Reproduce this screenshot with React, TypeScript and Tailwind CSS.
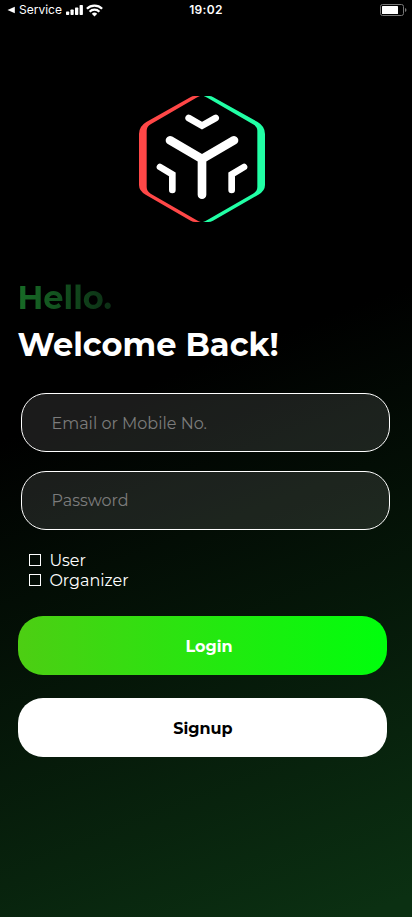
import type { ReactNode } from "react";

function StatusBar() {
  return (
    <header className="grid h-5 grid-cols-3 items-center pl-[7px] pr-[5px] font-['Inter',sans-serif] text-white">
      <div className="flex items-center">
        <svg width="8" height="8" viewBox="0 0 8 8" fill="currentColor"><path d="M.5 4 7.8.7v6.6z" /></svg>
        <span className="ml-1 w-[43px] whitespace-nowrap text-[12px] leading-5 tracking-[0px]">Service</span>
        <svg className="ml-1" width="17" height="10" viewBox="0 0 17 10" fill="currentColor">
          <rect x="0" y="6.5" width="3.2" height="3.5" rx=".7" />
          <rect x="4.5" y="4.6" width="3.2" height="5.4" rx=".7" />
          <rect x="9" y="2.5" width="3.3" height="7.5" rx=".7" />
          <rect x="13.6" y="0" width="3.3" height="10" rx=".7" />
        </svg>
        <svg className="ml-[3px]" width="17" height="13" viewBox="0 0 17 13" fill="none" stroke="currentColor" strokeWidth="2.3">
          <path d="M.9 4.7a10.8 10.8 0 0 1 15.2 0" />
          <path d="M3.6 7.7a7 7 0 0 1 9.8 0" />
          <path d="m8.5 12.4-2.7-2.7a3.9 3.9 0 0 1 5.4 0z" fill="currentColor" stroke="none" />
        </svg>
      </div>
      <div className="pr-[2px] text-center text-[12px] font-semibold leading-5 tracking-[0.3px]">19:02</div>
      <svg className="justify-self-end" width="27" height="12" viewBox="0 0 27 12">
        <rect x=".5" y=".5" width="23" height="11" rx="2" fill="none" stroke="#777" />
        <rect x="2" y="2" width="16" height="8" rx=".5" fill="white" />
        <path d="M25 4v4q1.5-.6 1.5-2T25 4" fill="#777" />
      </svg>
    </header>
  );
}

function Logo() {
  return (
    <svg className="ml-[130px] mt-[65px] block" width="145" height="145" viewBox="0 0 435 435" fill="none">
      <path fill="#ff4747" d="M210 33H193Q187 33 181 37L49 111Q27 124 27 147V300Q27 318 47 329L182 407Q189 411 196 411H212Q206 409 199 405L62 326Q50 319 50 306V137Q50 125 62 118L199 38Q205 35 210 33Z" />
      <path fill="#21ffa5" d="M221 33H238Q244 33 250 37L383 111Q405 124 405 147V300Q405 318 385 329L249 407Q242 411 235 411H219Q225 409 232 405L369 326Q382 319 382 306V137Q382 125 369 118L232 38Q226 35 221 33Z" />
      <g stroke="white" strokeLinecap="round">
        <path strokeWidth="26" d="M120 166 216 222 312 166M216 222V329" />
        <path strokeWidth="20" d="m176 99 40 23 41-23M90 246l37 22v47M342 246l-37 22v47" />
      </g>
    </svg>
  );
}

function Field({ label, type }: { label: string; type: string }) {
  return (
    <input
      type={type}
      placeholder={label}
      aria-label={label}
      className="block h-[59px] w-[369px] rounded-[25px] border border-white bg-[#7c7c7c]/22 px-[29.5px] pt-[2px] text-[16px] font-normal text-white outline-none placeholder:text-[#7c7c7c] placeholder:opacity-100 [&[type=password]]:pt-0"
    />
  );
}

function Choice({ children }: { children: ReactNode }) {
  return (
    <label className="flex h-5 items-center gap-[8.4px] text-[16px] font-normal leading-5 text-white">
      <input type="checkbox" className="size-3 appearance-none border border-white" />
      <span className="pt-[2px]">{children}</span>
    </label>
  );
}

export default function App() {
  return (
    <main className="h-[917px] w-full overflow-hidden bg-[linear-gradient(159deg,#000_41%,#0b3012_98%)] font-['Montserrat','Inter',sans-serif]">
      <StatusBar />
      <Logo />
      <h1 className="ml-[17.5px] mt-[44px] text-[32px] font-bold leading-[47px] text-white">
        <span className="block w-[95px] bg-[linear-gradient(90deg,#176b26,#0c2d14)] bg-clip-text text-transparent">Hello.</span>
        <span className="block whitespace-nowrap">Welcome Back!</span>
      </h1>
      <form>
        <div className="ml-[21px] mt-[25px] flex flex-col gap-[19px]">
          <Field label="Email or Mobile No." type="text" />
          <Field label="Password" type="password" />
        </div>
        <div className="ml-[29px] mt-[20px]">
          <Choice>User</Choice>
          <Choice>Organizer</Choice>
        </div>
        <div className="ml-[18px] mt-[26px] flex w-[369px] flex-col gap-[23px] text-[16px] font-bold">
          <button type="button" className="h-[59px] rounded-[25px] bg-[linear-gradient(90deg,#4dce13,#00ff0c)] pl-[13px] pt-[2px] text-white">Login</button>
          <button type="button" className="h-[59px] rounded-[25px] bg-white pl-px pt-[2px] text-black">Signup</button>
        </div>
      </form>
    </main>
  );
}
